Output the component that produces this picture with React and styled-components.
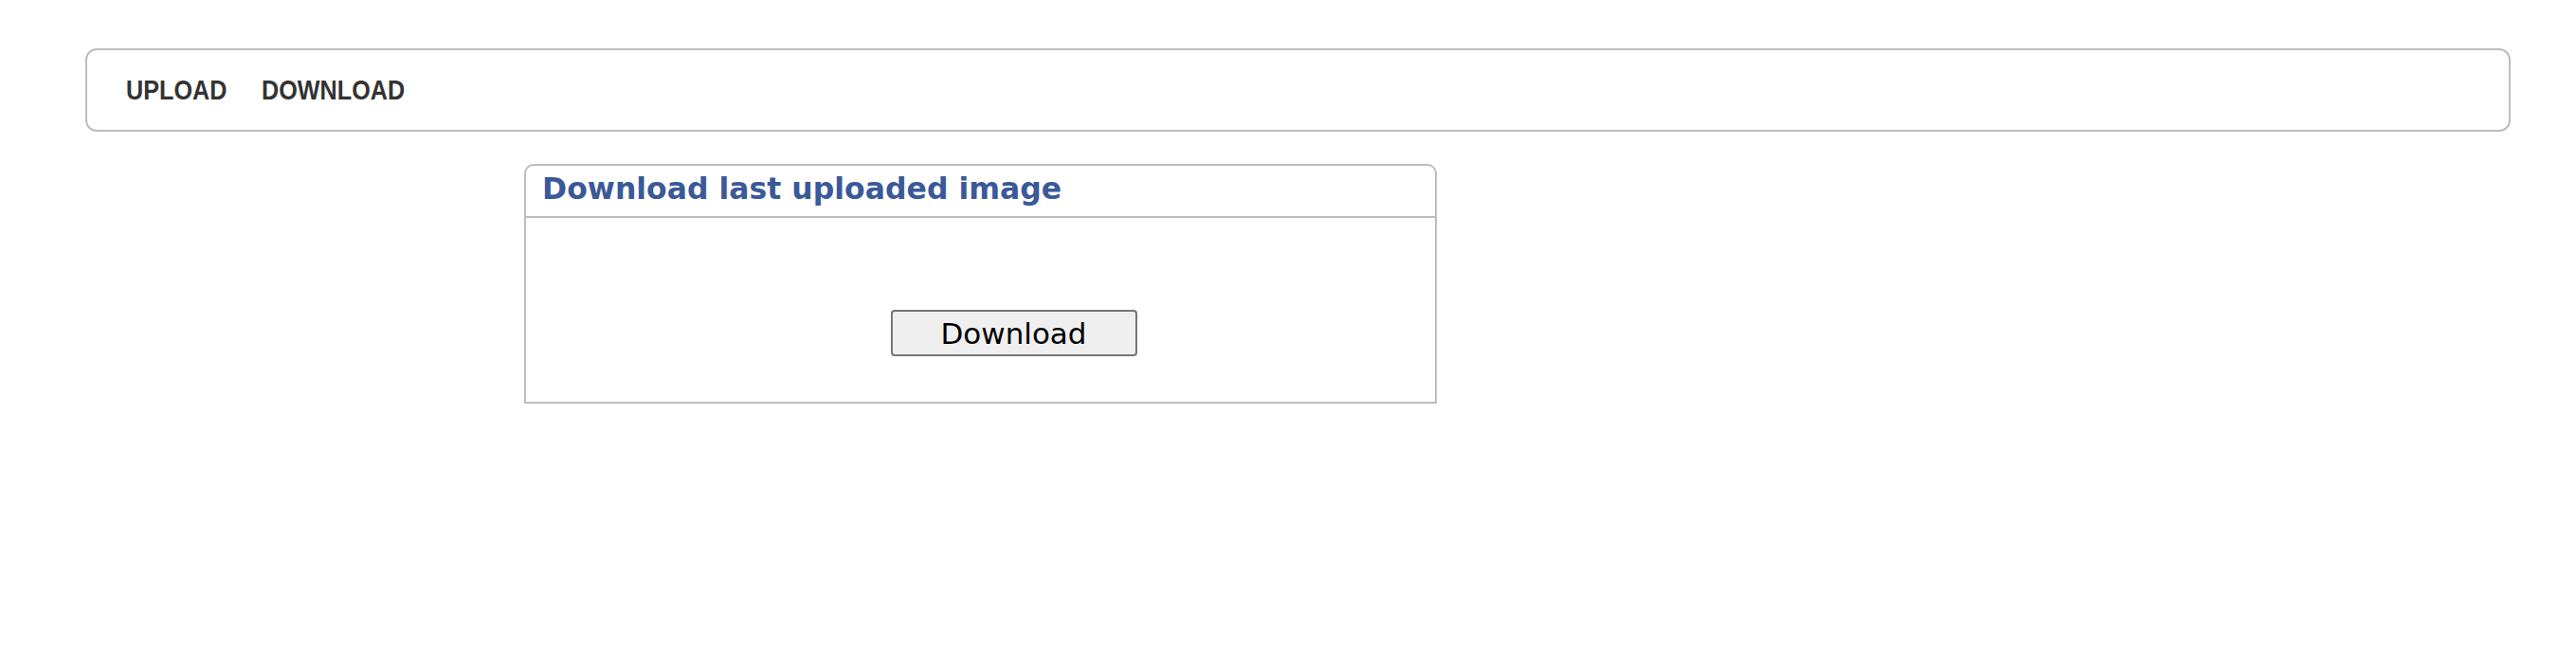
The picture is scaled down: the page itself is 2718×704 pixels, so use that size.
import React from "react";
import styled, { createGlobalStyle } from "styled-components";

const GlobalStyle = createGlobalStyle`
  html, body {
    margin: 0;
    padding: 0;
    background: #ffffff;
  }
  body {
    font-family: "DejaVu Sans", Verdana, sans-serif;
  }
`;

const Page = styled.div`
  padding: 51px 0 0 90px;
`;

const Nav = styled.nav`
  box-sizing: border-box;
  width: 2559px;
  height: 88px;
  border: 2px solid #bdbdbd;
  border-radius: 12px;
  display: flex;
  align-items: center;
  gap: 16px;
  padding-left: 41px;
`;

const NavLink = styled.a`
  display: inline-block;
  font-family: "Liberation Sans", Arial, sans-serif;
  font-weight: bold;
  font-size: 30px;
  color: #333333;
  text-decoration: none;
  cursor: pointer;
  transform: scaleX(0.84);
  transform-origin: left center;
`;

const Panel = styled.section`
  box-sizing: border-box;
  margin: 34px 0 0 463px;
  width: 963px;
  height: 253px;
  border: 2px solid #bdbdbd;
  border-radius: 10px 10px 0 0;
  display: flex;
  flex-direction: column;
`;

const PanelHeader = styled.header`
  box-sizing: border-box;
  height: 55px;
  border-bottom: 2px solid #bdbdbd;
  padding: 6px 0 0 17px;
`;

const PanelTitle = styled.h2`
  margin: 0;
  font-family: "DejaVu Sans", Verdana, sans-serif;
  font-weight: bold;
  font-size: 31.5px;
  line-height: normal;
  color: #3b5998;
`;

const PanelBody = styled.div`
  flex: 1;
  display: flex;
  justify-content: center;
  align-items: flex-start;
  padding: 97px 0 0 70px;
`;

const Button = styled.button`
  box-sizing: border-box;
  width: 260px;
  height: 49px;
  border: 2px solid #767676;
  border-radius: 4px;
  background: #efefef;
  color: #000000;
  font-family: "DejaVu Sans", Verdana, sans-serif;
  font-size: 31px;
  padding: 0;
  cursor: pointer;
`;

export default function App() {
  return (
    <>
      <GlobalStyle />
      <Page>
        <Nav>
          <NavLink>UPLOAD</NavLink>
          <NavLink>DOWNLOAD</NavLink>
        </Nav>
        <Panel>
          <PanelHeader>
            <PanelTitle>Download last uploaded image</PanelTitle>
          </PanelHeader>
          <PanelBody>
            <Button>Download</Button>
          </PanelBody>
        </Panel>
      </Page>
    </>
  );
}
